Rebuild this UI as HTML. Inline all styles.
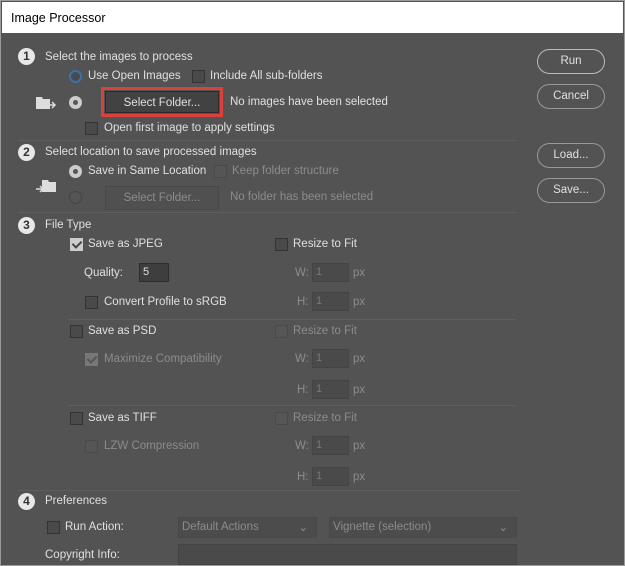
<!DOCTYPE html><html><head><style>
*{box-sizing:border-box}body{margin:0;width:625px;height:566px;overflow:hidden;background:#fff;font-family:"Liberation Sans",sans-serif;font-size:11.5px}
#w{position:absolute;left:0;top:0;width:625px;height:566px;border:1px solid #9a9a9a;background:#535353}
#t{position:absolute;left:1px;top:1px;width:621px;height:31px;background:#fff;color:#000;font-size:12.5px;padding:9px 9px}
.a{position:absolute;color:#e0e0e0;white-space:nowrap;line-height:15px}
.d{color:#8c8c8c}
.n{position:absolute;width:17px;height:17px;border-radius:50%;background:#e8e8e8;color:#333;font-weight:bold;font-size:12px;text-align:center;line-height:17px}
.cb{position:absolute;width:13px;height:13px;border:1px solid #333;background:#4a4a4a}
.cb.d2{border-color:#4a4a4a;background:#555}
.cb.ck{background:#ccc;border-color:#ccc}
.cb.ck:after{content:"";position:absolute;left:3px;top:0px;width:4px;height:7px;border:solid #444;border-width:0 2px 2px 0;transform:rotate(45deg)}
.cb.ckd{background:#777;border-color:#777}
.cb.ckd:after{content:"";position:absolute;left:3px;top:0px;width:4px;height:7px;border:solid #555;border-width:0 2px 2px 0;transform:rotate(45deg)}
.r{position:absolute;width:13px;height:13px;border-radius:50%;background:#ccc}
.r.s:after{content:"";position:absolute;left:4px;top:4px;width:5px;height:5px;border-radius:50%;background:#555}
.sep{position:absolute;height:1px;background:#3a3a3a;border-bottom:1px solid #5e5e5e}
.btn{position:absolute;background:#454545;border:1px solid #3a3a3a;text-align:center;color:#e0e0e0;line-height:22px}
.pill{position:absolute;left:536px;width:68px;height:25px;border:1px solid #bbb;border-radius:13px;text-align:center;line-height:23px;color:#e0e0e0}
.in{position:absolute;background:#4a4a4a;border:1px solid #444;width:37px;height:19px;color:#777;padding-left:3px;font-size:11px;line-height:17px}
</style></head><body><div id="w">
<div id="t">Image Processor</div>
<div class="pill" style="top:48px">Run</div>
<div class="pill" style="top:83px;border-color:#999">Cancel</div>
<div class="pill" style="top:142px;border-color:#999">Load...</div>
<div class="pill" style="top:177px;border-color:#999">Save...</div>

<div class="n" style="left:17px;top:47px">1</div><div class="a" style="left:44px;top:49px">Select the images to process</div>
<div class="r" style="left:68px;top:69px;background:#4a4a4a;border:2px solid #3c6fb0"></div><div class="a" style="left:87px;top:68px">Use Open Images</div>
<div class="cb" style="left:191px;top:69px"></div><div class="a" style="left:209px;top:68px">Include All sub-folders</div>
<svg style="position:absolute;left:34px;top:94px" width="22" height="16"><path d="M1 2h6l1 2h7v10H1z" fill="#ddd"/><path d="M14 10h6M17 7l3 3-3 3" stroke="#ddd" stroke-width="1.5" fill="none"/></svg>
<div class="r s" style="left:68px;top:95px"></div>
<div style="position:absolute;left:100px;top:86px;width:122px;height:30px;border:3px solid #d9413b"></div>
<div class="btn" style="left:104px;top:90px;width:114px;height:22px;border-color:#2a2a2a;background:#424242">Select Folder...</div>
<div class="a" style="left:229px;top:94px">No images have been selected</div>
<div class="cb" style="left:84px;top:121px"></div><div class="a" style="left:103px;top:120px">Open first image to apply settings</div>
<div class="sep" style="left:17px;top:139px;width:498px"></div>

<div class="n" style="left:17px;top:143px">2</div><div class="a" style="left:44px;top:144px">Select location to save processed images</div>
<div class="r s" style="left:68px;top:164px"></div><div class="a" style="left:87px;top:163px">Save in Same Location</div>
<div class="cb d2" style="left:213px;top:164px"></div><div class="a d" style="left:231px;top:163px">Keep folder structure</div>
<svg style="position:absolute;left:34px;top:177px" width="22" height="16"><path d="M7 2h6l1 2h7v10H7z" fill="#ddd"/><path d="M1 11h7M5 8l3 3-3 3" stroke="#ddd" stroke-width="1.5" fill="none"/></svg>
<div class="r" style="left:68px;top:190px;background:#555;border:1px solid #444"></div>
<div class="btn" style="left:104px;top:185px;width:114px;height:24px;color:#8c8c8c;background:#505050;border-color:#484848">Select Folder...</div>
<div class="a d" style="left:229px;top:189px">No folder has been selected</div>
<div class="sep" style="left:17px;top:211px;width:498px"></div>

<div class="n" style="left:17px;top:216px">3</div><div class="a" style="left:44px;top:217px">File Type</div>
<div class="cb ck" style="left:69px;top:237px"></div><div class="a" style="left:87px;top:236px">Save as JPEG</div>
<div class="cb" style="left:274px;top:237px"></div><div class="a" style="left:292px;top:236px">Resize to Fit</div>
<div class="a" style="left:83px;top:265px">Quality:</div>
<div class="in" style="left:138px;top:262px;width:30px;color:#e0e0e0;background:#3e3e3e;border-color:#2e2e2e">5</div>
<div class="a d" style="left:294px;top:265px">W:</div><div class="in" style="left:311px;top:262px"> 1</div><div class="a d" style="left:352px;top:265px">px</div>
<div class="cb" style="left:84px;top:295px"></div><div class="a" style="left:103px;top:294px">Convert Profile to sRGB</div>
<div class="a d" style="left:296px;top:294px">H:</div><div class="in" style="left:311px;top:291px">1</div><div class="a d" style="left:352px;top:294px">px</div>
<div class="sep" style="left:66px;top:318px;width:449px"></div>

<div class="cb" style="left:69px;top:324px"></div><div class="a" style="left:87px;top:323px">Save as PSD</div>
<div class="cb d2" style="left:274px;top:324px"></div><div class="a d" style="left:292px;top:323px">Resize to Fit</div>
<div class="cb ckd" style="left:84px;top:352px"></div><div class="a d" style="left:103px;top:351px">Maximize Compatibility</div>
<div class="a d" style="left:294px;top:351px">W:</div><div class="in" style="left:311px;top:348px">1</div><div class="a d" style="left:352px;top:351px">px</div>
<div class="a d" style="left:296px;top:382px">H:</div><div class="in" style="left:311px;top:379px">1</div><div class="a d" style="left:352px;top:382px">px</div>
<div class="sep" style="left:66px;top:404px;width:449px"></div>

<div class="cb" style="left:69px;top:411px"></div><div class="a" style="left:87px;top:410px">Save as TIFF</div>
<div class="cb d2" style="left:274px;top:411px"></div><div class="a d" style="left:292px;top:410px">Resize to Fit</div>
<div class="cb d2" style="left:84px;top:439px"></div><div class="a d" style="left:103px;top:438px">LZW Compression</div>
<div class="a d" style="left:294px;top:438px">W:</div><div class="in" style="left:311px;top:435px">1</div><div class="a d" style="left:352px;top:438px">px</div>
<div class="a d" style="left:296px;top:469px">H:</div><div class="in" style="left:311px;top:466px">1</div><div class="a d" style="left:352px;top:469px">px</div>
<div class="sep" style="left:17px;top:489px;width:501px"></div>

<div class="n" style="left:17px;top:492px">4</div><div class="a" style="left:44px;top:493px">Preferences</div>
<div class="cb" style="left:46px;top:520px"></div><div class="a" style="left:64px;top:519px">Run Action:</div>
<div style="position:absolute;left:177px;top:516px;width:139px;height:21px;background:#4c4c4c;border:1px solid #484848;color:#8c8c8c;padding:3px 3px">Default Actions<span style="position:absolute;right:8px;top:2px">⌄</span></div>
<div style="position:absolute;left:328px;top:516px;width:188px;height:21px;background:#4c4c4c;border:1px solid #484848;color:#8c8c8c;padding:3px 3px">Vignette (selection)<span style="position:absolute;right:8px;top:2px">⌄</span></div>
<div class="a" style="left:44px;top:547px">Copyright Info:</div>
<div style="position:absolute;left:177px;top:543px;width:339px;height:21px;background:#4a4a4a;border:1px solid #444"></div>
</div></body></html>
